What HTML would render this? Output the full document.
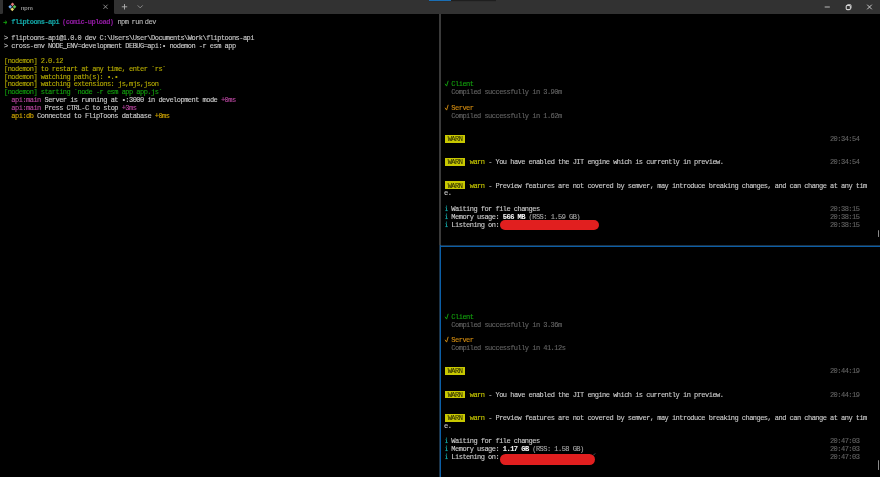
<!DOCTYPE html>
<html><head><meta charset="utf-8">
<style>
*{margin:0;padding:0;box-sizing:border-box}
html,body{width:880px;height:477px;overflow:hidden;background:#000}
body{position:relative;font-family:"Liberation Sans",sans-serif}
#tl{position:absolute;left:0;top:0;width:3px;height:14px;background:#323232;border-bottom-right-radius:1.5px}
#tr{position:absolute;left:113.5px;top:0;width:766.5px;height:14px;background:#323232;border-bottom-left-radius:1.5px}
.term{position:absolute;-webkit-text-stroke:0.12px;font-family:"Liberation Mono",monospace;font-size:7px;letter-spacing:-0.5247px;line-height:7.78px;white-space:pre;color:#cccccc}
.r{position:absolute;left:0;height:7.78px}
.g{color:#13a10e}.c{color:#13a3a3}.p{color:#8a1a9a}.y{color:#b6ab00}.d{color:#636363}.rs{color:#a8a8a8}
.pk{color:#bb48a2}.gd{color:#d4a800}.w{color:#e6e6e6}.b{font-weight:bold;color:#f2f2f2}
.or{color:#d08a10}.yw{color:#c8c800}
.badge{color:#303000;-webkit-text-stroke:0.1px}
.bg{position:absolute;left:0.5px;width:20.8px;height:7.8px;background:#c8c800}
#div{position:absolute;left:439px;top:14px;width:2px;height:232px;background:#3a3a3a}
#bh{position:absolute;left:440px;top:245px;width:440px;height:2px;background:linear-gradient(#1d3346 0,#1d3346 1px,#0b5ea6 1px)}
#bv{position:absolute;left:439px;top:245px;width:2px;height:232px;background:linear-gradient(90deg,#1d3346 0,#1d3346 1px,#0b5ea6 1px)}
.red{position:absolute;background:#e11f1f;border-radius:6px}
.thumb{position:absolute;left:878px;width:1.3px;background:#8a8a8a;border-radius:1px}
</style></head><body>
<div id="root" style="position:absolute;left:0;top:0;width:880px;height:477px;will-change:transform">
<div id="tl"></div>
<div id="tr"></div>
<svg style="position:absolute;left:0;top:0" width="880" height="14" viewBox="0 0 880 14">
  <!-- tab icon -->
  <g>
    <rect x="11.2" y="3" width="2.6" height="2.6" fill="#e07a7a" transform="rotate(45 12.5 4.3)"/>
    <rect x="8.9" y="5.5" width="2.6" height="2.6" fill="#74aef2" transform="rotate(45 10.2 6.8)"/>
    <rect x="13.2" y="5.5" width="2.6" height="2.6" fill="#5cc25c" transform="rotate(45 14.5 6.8)"/>
    <rect x="11" y="8" width="2.6" height="2.6" fill="#e6d870" transform="rotate(45 12.3 9.3)"/>
  </g>
  <text x="21" y="9.9" font-family="Liberation Sans" font-size="6" fill="#c8c8c8">npm</text>
  <path d="M103.4 4.7 L107.6 8.9 M107.6 4.7 L103.4 8.9" stroke="#a8a8a8" stroke-width="0.8" fill="none"/>
  <path d="M121.8 6.8 H127.2 M124.5 4.1 V9.5" stroke="#b4b4b4" stroke-width="0.9" fill="none"/>
  <path d="M137.7 5.4 L140.2 7.9 L142.7 5.4" stroke="#9c9c9c" stroke-width="0.8" fill="none"/>
  <path d="M824.7 7 H829.8" stroke="#c8c8c8" stroke-width="0.9" fill="none"/>
  <rect x="846.2" y="5.4" width="4.2" height="4.2" rx="1.2" stroke="#d4d4d4" stroke-width="1.1" fill="none"/>
  <path d="M847.4 4.5 H850 Q851.2 4.5 851.2 5.7 V8.4" stroke="#c8c8c8" stroke-width="0.8" fill="none"/>
  <path d="M867.2 4.7 L871.8 9.3 M871.8 4.7 L867.2 9.3" stroke="#d8d8d8" stroke-width="0.9" fill="none"/>
  <rect x="429" y="0" width="67" height="1.2" fill="#1f1f1f"/>
  <rect x="429" y="0" width="22" height="1" fill="#1a6eb4"/>
</svg>

<div class="term" id="left" style="left:4px;top:19px;width:435px;height:458px">
<div class="r" style="top:0">  <span class="c" style="font-weight:bold">fliptoons-api</span> <span class="p" style="font-weight:bold;position:relative;left:-0.8px">(comic-upload)</span> <span style="position:relative;left:-0.6px;color:#b8b8b8">npm</span> <span style="position:relative;left:-1.2px;color:#b8b8b8">run</span> <span style="position:relative;left:-2.6px;color:#b8b8b8">dev</span></div>
<div class="r" style="top:16px">&gt; fliptoons-api@1.0.0 dev C:\Users\User\Documents\Work\fliptoons-api</div>
<div class="r" style="top:24px">&gt; cross-env NODE_ENV=development DEBUG=api:• nodemon -r esm app</div>
<div class="r y" style="top:39px">[nodemon] 2.0.12</div>
<div class="r y" style="top:47px">[nodemon] to restart at any time, enter `rs`</div>
<div class="r y" style="top:55px">[nodemon] watching path(s): •.•</div>
<div class="r y" style="top:62px">[nodemon] watching extensions: js,mjs,json</div>
<div class="r g" style="top:70px">[nodemon] starting `node -r esm app app.js`</div>
<div class="r" style="top:78px">  <span class="pk">api:main</span> Server is running at •:3000 in development mode <span class="pk">+0ms</span></div>
<div class="r" style="top:86px">  <span class="pk">api:main</span> Press CTRL-C to stop <span class="pk">+3ms</span></div>
<div class="r" style="top:94px">  <span class="gd">api:db</span> Connected to FlipToons database <span class="gd">+0ms</span></div>
</div>

<div id="div"></div>
<svg style="position:absolute;left:0;top:16px" width="12" height="12" viewBox="0 16 12 12"><path d="M3.4 22.4 H6.8 M5.2 20.8 L7 22.4 L5.2 24" stroke="#13a10e" stroke-width="1" fill="none"/></svg>

<div class="term" id="rt" style="left:444px;top:19px;width:436px;height:227px">
<div class="r" style="top:62px">  <span class="g">Client</span></div>
<div class="r d" style="top:70px">  Compiled successfully in 3.90m</div>
<div class="r" style="top:86px">  <span class="or">Server</span></div>
<div class="r d" style="top:94px">  Compiled successfully in 1.62m</div>
<div class="bg" style="top:115.80px"></div>
<div class="r" style="top:117px"><span class="badge"> WARN </span></div>
<div class="r d" style="top:117px;left:385.95px">20:34:54</div>
<div class="bg" style="top:139.14px"></div>
<div class="r" style="top:140px"><span class="badge"> WARN </span> <span class="yw">warn</span> - You have enabled the JIT engine which is currently in preview.</div>
<div class="r d" style="top:140px;left:385.95px">20:34:54</div>
<div class="bg" style="top:162.48px"></div>
<div class="r" style="top:164px"><span class="badge"> WARN </span> <span class="yw">warn</span> - Preview features are not covered by semver, may introduce breaking changes, and can change at any tim</div>
<div class="r" style="top:171px">e.</div>
<div class="r" style="top:187px">  Waiting for file changes</div>
<div class="r d" style="top:187px;left:385.95px">20:38:15</div>
<div class="r" style="top:195px">  Memory usage: <span class="b">566 MB</span> <span class="rs">(RSS: 1.59 GB)</span></div>
<div class="r d" style="top:195px;left:385.95px">20:38:15</div>
<div class="r" style="top:203px">  Listening on:</div>
<div class="r d" style="top:203px;left:385.95px">20:38:15</div>
</div>
<div class="red" style="left:499.8px;top:219.8px;width:99.4px;height:10.7px"></div>
<div class="thumb" style="top:230px;height:7px"></div>

<svg style="position:absolute;left:0;top:0" width="880" height="477" viewBox="0 0 880 477"><path d="M445.3 84.1 L446.6 86.1 L448.1 81.2" stroke="#13a10e" stroke-width="0.95" fill="none" stroke-linecap="round" stroke-linejoin="round"/><path d="M445.3 108.1 L446.6 110.1 L448.1 105.2" stroke="#d08a10" stroke-width="0.95" fill="none" stroke-linecap="round" stroke-linejoin="round"/><path d="M445.3 317.1 L446.6 319.1 L448.1 314.2" stroke="#13a10e" stroke-width="0.95" fill="none" stroke-linecap="round" stroke-linejoin="round"/><path d="M445.3 340.1 L446.6 342.1 L448.1 337.2" stroke="#d08a10" stroke-width="0.95" fill="none" stroke-linecap="round" stroke-linejoin="round"/></svg>
<svg style="position:absolute;left:0;top:0" width="880" height="477" viewBox="0 0 880 477"><circle cx="446.5" cy="206.1" r="0.6" fill="#12a4a4"/><path d="M445.6 207.6 H446.5 V210.6 M445.4 210.6 H447.7" stroke="#12a4a4" stroke-width="0.9" fill="none"/><circle cx="446.5" cy="214.1" r="0.6" fill="#12a4a4"/><path d="M445.6 215.6 H446.5 V218.6 M445.4 218.6 H447.7" stroke="#12a4a4" stroke-width="0.9" fill="none"/><circle cx="446.5" cy="222.1" r="0.6" fill="#12a4a4"/><path d="M445.6 223.6 H446.5 V226.6 M445.4 226.6 H447.7" stroke="#12a4a4" stroke-width="0.9" fill="none"/><circle cx="446.5" cy="438.1" r="0.6" fill="#12a4a4"/><path d="M445.6 439.6 H446.5 V442.6 M445.4 442.6 H447.7" stroke="#12a4a4" stroke-width="0.9" fill="none"/><circle cx="446.5" cy="446.1" r="0.6" fill="#12a4a4"/><path d="M445.6 447.6 H446.5 V450.6 M445.4 450.6 H447.7" stroke="#12a4a4" stroke-width="0.9" fill="none"/><circle cx="446.5" cy="454.1" r="0.6" fill="#12a4a4"/><path d="M445.6 455.6 H446.5 V458.6 M445.4 458.6 H447.7" stroke="#12a4a4" stroke-width="0.9" fill="none"/></svg>
<div id="bh"></div>
<div id="bv"></div>

<div class="term" id="rb" style="left:444px;top:251px;width:436px;height:226px">
<div class="r" style="top:63px">  <span class="g">Client</span></div>
<div class="r d" style="top:71px">  Compiled successfully in 3.36m</div>
<div class="r" style="top:86px">  <span class="or">Server</span></div>
<div class="r d" style="top:94px">  Compiled successfully in 41.12s</div>
<div class="bg" style="top:116.1px"></div>
<div class="r" style="top:117px"><span class="badge"> WARN </span></div>
<div class="r d" style="top:117px;left:385.95px">20:44:19</div>
<div class="bg" style="top:139.5px"></div>
<div class="r" style="top:141px"><span class="badge"> WARN </span> <span class="yw">warn</span> - You have enabled the JIT engine which is currently in preview.</div>
<div class="r d" style="top:141px;left:385.95px">20:44:19</div>
<div class="bg" style="top:162.9px"></div>
<div class="r" style="top:164px"><span class="badge"> WARN </span> <span class="yw">warn</span> - Preview features are not covered by semver, may introduce breaking changes, and can change at any tim</div>
<div class="r" style="top:172px">e.</div>
<div class="r" style="top:187px">  Waiting for file changes</div>
<div class="r d" style="top:187px;left:385.95px">20:47:03</div>
<div class="r" style="top:195px">  Memory usage: <span class="b">1.17 GB</span> <span class="rs">(RSS: 1.58 GB)</span></div>
<div class="r d" style="top:195px;left:385.95px">20:47:03</div>
<div class="r" style="top:203px">  Listening on:</div>
<div class="r d" style="top:203px;left:385.95px">20:47:03</div>
</div>
<div class="red" style="left:499.8px;top:453.8px;width:95px;height:11px"></div>
<svg style="position:absolute;left:590px;top:450px" width="8" height="8"><path d="M3.4 5.2 L5.2 3.4" stroke="#5a6a6a" stroke-width="0.8"/></svg>
<div class="thumb" style="top:459.5px;height:10px"></div>

</div>
</body></html>
